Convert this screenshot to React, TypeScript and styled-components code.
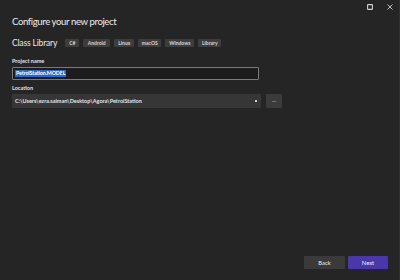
import React from "react";
import styled, { createGlobalStyle } from "styled-components";

const Global = createGlobalStyle`
  html, body { margin: 0; padding: 0; background: #252525; }
  body { font-family: Lato, "Noto Sans", sans-serif; }
`;

const Window = styled.div`
  width: 400px;
  height: 280px;
  box-sizing: border-box;
  background: #252525;
  border-right: 1px solid #303030;
  display: flex;
  flex-direction: column;
  color: #e6e6e6;
`;

const TitleBar = styled.div`
  height: 13px;
  display: flex;
  justify-content: flex-end;
  align-items: center;
  gap: 10px;
  padding-right: 4px;
  padding-top: 1px;
  box-sizing: border-box;
`;

const TitleIcon = styled.div`
  width: 10px;
  height: 10px;
  display: flex;
  align-items: center;
  justify-content: center;
`;

const Content = styled.div`
  display: flex;
  flex-direction: column;
  padding: 0 12px;
`;

const Title = styled.h1`
  margin: 1px 0 0 0;
  font-size: 9.6px;
  line-height: 16px;
  font-weight: 400;
  letter-spacing: -0.4px;
  color: #ececec;
`;

const SubRow = styled.div`
  display: flex;
  align-items: center;
  margin-top: 7px;
  gap: 4px;
`;

const Subtitle = styled.span`
  font-size: 8.6px;
  line-height: 12px;
  letter-spacing: -0.2px;
  color: #e8e8e8;
  margin-right: 4px;
`;

const Tag = styled.span<{ $w: number }>`
  width: ${(p) => p.$w}px;
  height: 8px;
  background: #3d3d3d;
  border-radius: 1px;
  color: #d8d8d8;
  font-size: 5px;
  line-height: 8px;
  text-align: center;
  font-weight: 700;
`;

const Label = styled.div<{ $mt: number }>`
  margin-top: ${(p) => p.$mt}px;
  font-size: 5.5px;
  line-height: 7px;
  font-weight: 700;
  color: #e2e2e2;
`;

const Selection = styled.span`
  background: #2f66c9;
  color: #ffffff;
  padding: 0 1px;
  font-weight: 700;
  letter-spacing: -0.1px;
`;

const FakeInput = styled.div`
  margin-top: 2px;
  width: 247px;
  height: 13px;
  box-sizing: border-box;
  background: #1c1c1c;
  border: 1px solid #7a7a7a;
  border-radius: 1px;
  padding: 0 2px;
  display: flex;
  align-items: center;
  font-size: 5.3px;
  line-height: 7px;
`;

const LocationRow = styled.div`
  margin-top: 2px;
  display: flex;
  align-items: center;
  gap: 5px;
`;

const Select = styled.div`
  width: 249px;
  height: 14px;
  box-sizing: border-box;
  background: #363636;
  border-radius: 1px;
  display: flex;
  align-items: center;
  justify-content: space-between;
  padding: 0 4px 0 3px;
  font-size: 5.5px;
  font-weight: 700;
  color: #e4e4e4;
`;

const Caret = styled.span`
  width: 2px;
  height: 2px;
  background: #cfcfcf;
`;

const SmallButton = styled.div`
  width: 16px;
  height: 14px;
  background: #3b3b3b;
  border-radius: 1px;
  color: #ddd;
  font-size: 6px;
  line-height: 11px;
  text-align: center;
`;

const Footer = styled.div`
  margin-top: auto;
  display: flex;
  justify-content: flex-end;
  gap: 3px;
  padding: 0 11px 11px 0;
`;

const Button = styled.div<{ $primary?: boolean }>`
  width: ${(p) => (p.$primary ? 40 : 41)}px;
  height: 13px;
  background: ${(p) => (p.$primary ? "#4a37a8" : "#3a3a3a")};
  border-radius: 1px;
  color: #f0f0f0;
  font-size: 5.8px;
  line-height: 13px;
  text-align: center;
`;

export default function App() {
  return (
    <>
      <Global />
      <Window>
        <TitleBar>
          <TitleIcon>
            <svg width="6" height="6" viewBox="0 0 6 6">
              <rect x="0.6" y="0.6" width="4.8" height="4.8" fill="none" stroke="#d0d0d0" strokeWidth="1.1" rx="0.5" />
            </svg>
          </TitleIcon>
          <TitleIcon>
            <svg width="6" height="6" viewBox="0 0 6 6">
              <path d="M0.5 0.5 L5.5 5.5 M5.5 0.5 L0.5 5.5" stroke="#d0d0d0" strokeWidth="0.9" />
            </svg>
          </TitleIcon>
        </TitleBar>
        <Content>
          <Title>Configure your new project</Title>
          <SubRow>
            <Subtitle>Class Library</Subtitle>
            <Tag $w={14}>C#</Tag>
            <Tag $w={27}>Android</Tag>
            <Tag $w={20}>Linux</Tag>
            <Tag $w={23}>macOS</Tag>
            <Tag $w={29}>Windows</Tag>
            <Tag $w={23}>Library</Tag>
          </SubRow>
          <Label $mt={9}>Project name</Label>
          <FakeInput>
            <Selection>PetrolStation.MODEL</Selection>
          </FakeInput>
          <Label $mt={5}>Location</Label>
          <LocationRow>
            <Select>
              <span>C:\Users\ezra.salman\Desktop\Agora\PetrolStation</span>
              <Caret />
            </Select>
            <SmallButton>...</SmallButton>
          </LocationRow>
        </Content>
        <Footer>
          <Button>Back</Button>
          <Button $primary>Next</Button>
        </Footer>
      </Window>
    </>
  );
}
